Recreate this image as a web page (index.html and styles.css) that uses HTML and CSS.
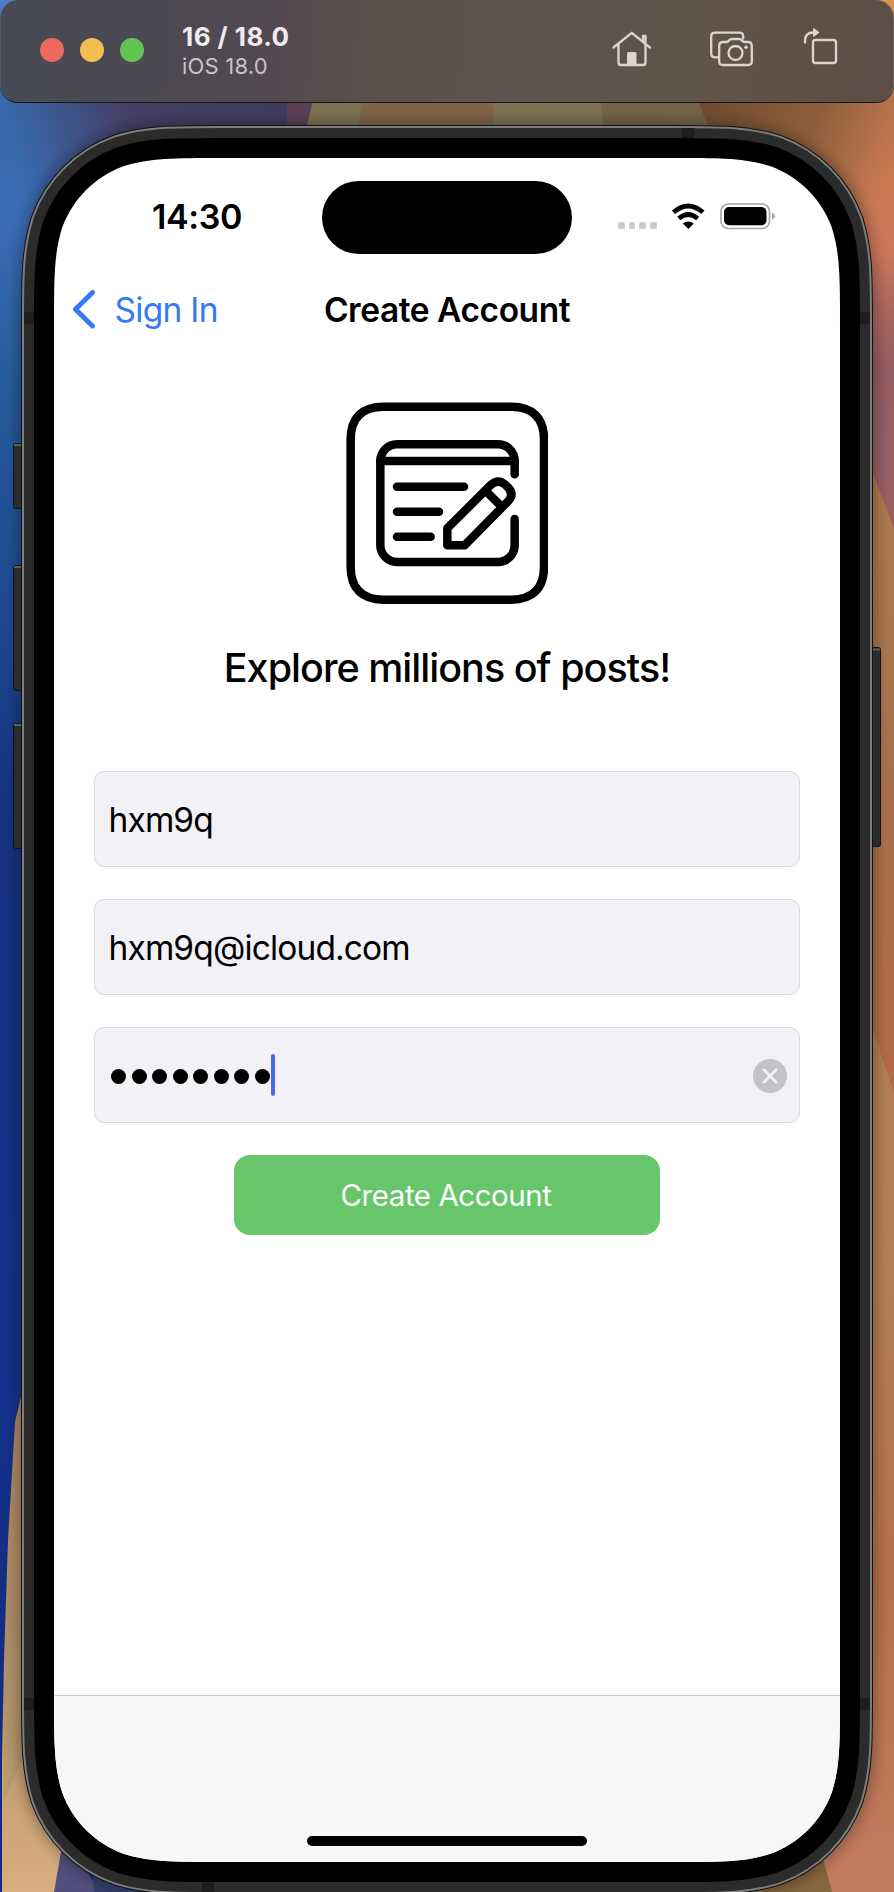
FILE: index.html
```html
<!DOCTYPE html>
<html lang="en">
<head>
<meta charset="utf-8">
<title>16 / 18.0</title>
<link rel="stylesheet" href="styles.css">
</head>
<body>
<div class="desktop">
  <svg class="backdrop" viewBox="0 0 894 1892" aria-hidden="true">
    <defs>
      <linearGradient id="left" x1="0" y1="0" x2="0" y2="1">
        <stop offset="0" stop-color="#4f7cc6"/><stop offset=".05" stop-color="#3768aa"/><stop offset=".12" stop-color="#3a6cb5"/>
        <stop offset=".2" stop-color="#255c9c"/><stop offset=".33" stop-color="#1d4890"/>
        <stop offset=".43" stop-color="#153180"/><stop offset=".75" stop-color="#12318a"/><stop offset="1" stop-color="#142a78"/>
      </linearGradient>
      <linearGradient id="violet" gradientUnits="userSpaceOnUse" x1="15" y1="150" x2="300" y2="80"><stop offset="0" stop-color="#443f62" stop-opacity="0"/><stop offset=".4" stop-color="#443f66"/><stop offset="1" stop-color="#3f3b5e"/></linearGradient>
      <linearGradient id="right" gradientUnits="userSpaceOnUse" x1="0" y1="0" x2="0" y2="560">
        <stop offset="0" stop-color="#d99452"/><stop offset=".18" stop-color="#b8704a"/><stop offset=".32" stop-color="#cb7850"/><stop offset=".45" stop-color="#cb775a"/>
        <stop offset=".56" stop-color="#a9655e"/><stop offset=".66" stop-color="#935d62"/><stop offset=".8" stop-color="#9d605a"/>
      </linearGradient>
      <linearGradient id="gold" x1="0" y1="0" x2="0" y2="1">
        <stop offset="0" stop-color="#ab7c50"/><stop offset=".5" stop-color="#a8714b"/><stop offset="1" stop-color="#b46a48"/>
      </linearGradient>
      <linearGradient id="lower" x1="0" y1="0" x2="0" y2="1">
        <stop offset="0" stop-color="#b07f53"/><stop offset=".3" stop-color="#b38054"/><stop offset=".65" stop-color="#b4704b"/><stop offset="1" stop-color="#c47a60"/>
      </linearGradient>
      <linearGradient id="rust" gradientUnits="userSpaceOnUse" x1="700" y1="110" x2="890" y2="190"><stop offset="0" stop-color="#6f4a30"/><stop offset=".55" stop-color="#8f5f3c"/><stop offset=".8" stop-color="#b06f48"/><stop offset="1" stop-color="#c77750" stop-opacity="0"/></linearGradient>
      <linearGradient id="sand" x1="0" y1="0" x2="0" y2="1"><stop offset="0" stop-color="#ab8563"/><stop offset=".5" stop-color="#ae8c66"/><stop offset="1" stop-color="#d9ae80"/></linearGradient>
      <filter id="soft" x="-20%" y="-20%" width="140%" height="140%"><feGaussianBlur stdDeviation="7"/></filter>
      <path id="outline" d="M168 0H618C666.3 0 690.5 0 716.5 8.2C745 18.6 767.4 41 777.8 69.5C786 95.5 786 119.7 786 168V1536C786 1584.3 786 1608.5 777.8 1634.5C767.4 1663 745 1685.4 716.5 1695.8C690.5 1704 666.3 1704 618 1704H168C119.7 1704 95.5 1704 69.5 1695.8C41 1685.4 18.6 1663 8.2 1634.5C0 1608.5 0 1584.3 0 1536V168C0 119.7 0 95.5 8.2 69.5C18.6 41 41 18.6 69.5 8.2C95.5 0 119.7 0 168 0Z"/>
    </defs>
    <rect width="894" height="1892" fill="url(#left)"/>
    <path fill="url(#violet)" d="M0 60H314L300 150L80 260H0Z"/>
    <path fill="#5b3f52" d="M287 100H316V130H287Z"/>
    <path fill="#7e7151" d="M313 100H364V130H306Z"/>
    <path fill="#7f6448" d="M362 100H494V130H358Z"/>
    <path fill="#7d7152" d="M492 100H603V130H495Z"/>
    <path fill="#746347" d="M601 100H700L712 130H604Z"/>
    <path fill="url(#right)" d="M860 0H894V560H860ZM697 100H894V260H800L711 132Z"/>
    <path fill="url(#rust)" d="M697 100H894V260H800L711 132Z"/>
    <path fill="#8d5f72" opacity=".6" d="M860 360L894 421V528L860 440Z" filter="url(#soft)"/>
    <path fill="url(#gold)" d="M860 440L894 528V1100H860Z"/>
    <path fill="url(#lower)" d="M860 992L894 1093V1892H780V1860L860 1780Z"/>
    <path fill="#86673f" d="M740 1892L822 1855L832 1892Z"/>
    <path fill="url(#sand)" d="M2 1892V1760L4 1660L8 1540L15 1422L24 1384V1700L90 1800L80 1892Z"/>
    <path fill="#a8946a" opacity=".55" d="M4 1676L22 1600V1760L4 1800Z"/>
    <path fill="#524e7d" d="M64 1835L54 1892H100Z"/>
    <path fill="#34406f" d="M92 1870L94 1892H240Z"/>
    <g transform="translate(54 158)" fill="none">
      <use href="#outline" stroke="#000" stroke-opacity=".3" stroke-width="72" filter="url(#soft)"/>
    </g>
    <g fill="#2b2b2b" stroke="#111">
      <rect x="13.500" y="443.500" width="14" height="65" rx="2"/>
      <rect x="13.500" y="565.500" width="14" height="125" rx="2"/>
      <rect x="13.500" y="723.500" width="14" height="125" rx="2"/>
      <rect x="866.500" y="647.500" width="14" height="199" rx="2"/>
    </g>
    <path stroke="#5c5c59" stroke-width="2" d="M14 445H22M14 567H22M14 725H22M872 649.500H880"/>
    <g transform="translate(54 158)" fill="none">
      <use href="#outline" stroke="#111" stroke-width="66"/>
      <use href="#outline" stroke="#7d7d7b" stroke-width="64"/>
      <use href="#outline" stroke="#2b2b2b" stroke-width="60"/>
      <use href="#outline" stroke="#000" stroke-width="40"/>
      <use href="#outline" fill="#fff"/>
    </g>
    <path fill="#1e1e1e" d="M24 312h10v12H24zM860 312h10v12h-10zM24 1698h10v12H24zM860 1698h10v12h-10zM682 128h12v10h-12zM202 1882h12v10h-12z"/>
  </svg>

  <header class="titlebar">
    <div class="lights"><i class="light close"></i><i class="light minimise"></i><i class="light zoom"></i></div>
    <div class="device-name"><strong>16 / 18.0</strong><span>iOS 18.0</span></div>
    <nav class="tools">
      <svg width="42" height="42" viewBox="610 28 42 42"><path d="M613.500 47.500L631.800 32.800L650 47.500"/><path d="M618.500 44V62.500Q618.500 65 621 65H643Q645.500 65 645.500 62.500V44M643 42V36H645.500V44"/><path class="solid" d="M627 65V53.500Q627 52 628.500 52H635Q636.500 52 636.500 53.500V65Z"/></svg>
      <svg width="46" height="42" viewBox="708 28 46 42"><path d="M718 57.300H715Q711.200 57.300 711.200 53.500V36.500Q711.200 32.700 715 32.700H739.500Q743.200 32.700 743.200 36.500V38.500"/><path d="M719.200 61.500V46Q719.200 42 723 42H726.500Q728 42 729 40.500Q730 39 732 39H739Q741 39 742 40.500Q743 42 744.500 42H748Q751.800 42 751.800 46V61.500Q751.800 65 748 65H723Q719.200 65 719.200 61.500Z"/><circle cx="735.500" cy="53" r="7"/><circle class="solid" cx="746" cy="47.300" r="1.700"/></svg>
      <svg width="38" height="42" viewBox="802 26 38 42"><rect x="813" y="40" width="23" height="23" rx="2.500"/><path d="M805 42.500V41Q805 32.500 813.500 32.500"/><path class="solid" d="M813 28.500Q813 27.800 813.800 28.300L819 32Q819.500 32.500 819 33L813.800 36.700Q813 37.100 813 36.400Z"/></svg>
    </nav>
  </header>

  <main class="screen">
    <div class="status">
      <time class="clock">14:30</time>
      <div class="island"></div>
      <div class="indicators">
        <div class="signal"><i></i><i></i><i></i><i></i></div>
        <svg class="wifi" width="34" height="26" viewBox="671 203 34 26"><g fill="none" stroke="#000" stroke-width="4.600"><path d="M673.500 212.300Q688.200 199.700 703 212.300"/><path d="M678.800 218.600Q688.200 210.400 697.700 218.600"/></g><path d="M688.300 229L682.800 223.600Q688.300 219.200 693.800 223.600Z"/></svg>
        <svg class="battery" width="56" height="28" viewBox="719 202 56 28"><rect x="721" y="204" width="48.500" height="24.500" rx="7.500" fill="none" stroke="#a7a7a7" stroke-width="1.700"/><rect x="724" y="207" width="42.500" height="18.300" rx="5"/><path fill="#a7a7a7" d="M772 212.500Q775 213.700 775 216.200Q775 218.700 772 220Z"/></svg>
      </div>
    </div>

    <div class="navbar">
      <a class="back"><svg width="24" height="40" viewBox="0 0 24 40"><path d="M20.500 2.500L3.500 19.300L20.500 36"/></svg><span>Sign In</span></a>
      <h1>Create Account</h1>
      <span></span>
    </div>

    <svg class="logo" viewBox="78 66 606 606" role="img" aria-label="Posts">
      <path d="M190 80H574C638 80 672 114 672 178V561C672 625 638 659 574 659H190C126 659 92 625 92 561V178C92 114 126 80 190 80Z"/>
      <path d="M584 283V243A50 50 0 0 0 534 193H231A50 50 0 0 0 181 243V496A50 50 0 0 0 231 546H534A50 50 0 0 0 584 496V417"/>
      <path d="M181 243H584M231 320H432M231 395H357M231 470H332"/>
      <path d="M382 496V445L512 315Q534 295 556 314L563 321Q584 342 565 363L434 496ZM500 335L545 380"/>
    </svg>
    <h2>Explore millions of posts!</h2>

    <form class="form">
      <div class="field">hxm9q</div>
      <div class="field">hxm9q@icloud.com</div>
      <div class="field secure">
        <div class="dots"><i></i><i></i><i></i><i></i><i></i><i></i><i></i><i></i></div>
        <div class="caret"></div>
        <svg class="clear" width="34" height="34" viewBox="0 0 34 34"><circle cx="17" cy="17" r="17"/><path d="M10.800 10.800L23.200 23.200M23.200 10.800L10.800 23.200"/></svg>
      </div>
      <button type="button" class="submit">Create Account</button>
    </form>

    <footer class="tabbar"><div class="home"></div></footer>
  </main>
</div>
</body>
</html>
```

FILE: styles.css
```css
* { box-sizing: border-box; }
body { margin: 0; font-family: Inter, "Liberation Sans", sans-serif; color: #000; }
.desktop { position: relative; width: 894px; height: 1892px; overflow: hidden; }
.backdrop { position: absolute; inset: 0; width: 894px; height: 1892px; }

.titlebar {
  position: relative;
  display: flex;
  align-items: center;
  height: 103px;
  padding: 0 54px 3px 40px;
  border-bottom: 1px solid #171513;
  border-radius: 18px;
  box-shadow: inset 1px 0 rgba(255,255,255,.1), inset -1px 0 rgba(255,255,255,.12);
  background: linear-gradient(95deg, #474a55 0%, #4b4952 14%, #514950 30%, #5a514a 43%, #5c544f 56%, #5e544a 67%, #615347 80%, #5d4e45 100%);
}
.lights { display: flex; gap: 16px; }
.light { width: 24px; height: 24px; border-radius: 50%; }
.close { background: #ec6a5e; }
.minimise { background: #f5bf4f; }
.zoom { background: #61c554; }
.device-name { display: flex; flex-direction: column; margin-left: 38px; padding-top: 3px; }
.device-name strong { font-size: 26px; line-height: 30px; font-weight: 700; letter-spacing: .45px; color: #eeecee; }
.device-name span { font-size: 22px; line-height: 28px; letter-spacing: .2px; color: #c9c3c8; }
.tools { display: flex; margin-left: auto; gap: 52px; margin-top: -2px; }
.tools svg { fill: none; stroke: #dfd4cb; stroke-width: 2.300; stroke-linecap: round; stroke-linejoin: round; }
.tools svg:nth-child(2) { margin-left: 4px; }
.tools svg:nth-child(3) { margin-left: -4px; margin-top: -2px; }
.tools .solid { fill: #dfd4cb; stroke: none; }

.screen {
  position: relative;
  display: flex;
  flex-direction: column;
  align-items: center;
  width: 786px;
  height: 1704px;
  margin: 55px 0 0 54px;
  clip-path: path("M168 0H618C666.300 0 690.500 0 716.500 8.200C745 18.600 767.400 41 777.800 69.500C786 95.500 786 119.700 786 168V1536C786 1584.300 786 1608.500 777.800 1634.500C767.400 1663 745 1685.400 716.500 1695.800C690.500 1704 666.300 1704 618 1704H168C119.700 1704 95.500 1704 69.500 1695.800C41 1685.400 18.600 1663 8.200 1634.500C0 1608.500 0 1584.300 0 1536V168C0 119.700 0 95.500 8.200 69.500C18.600 41 41 18.600 69.500 8.200C95.500 0 119.700 0 168 0Z");
}
.status { display: grid; grid-template-columns: 268px 250px 268px; align-items: center; width: 786px; height: 118px; }
.clock { padding: 0 0 2px 98px; font-size: 34px; font-weight: 600; letter-spacing: -.4px; white-space: nowrap; }
.island { height: 73.500px; margin-top: 1px; border-radius: 37px; background: #000; }
.indicators { display: flex; align-items: center; padding: 0 0 2px 46px; }
.signal { display: flex; gap: 4px; padding-top: 18px; }
.signal i { width: 6.700px; height: 7px; border-radius: 2px; background: #cbcbcb; }
.wifi { margin-left: 14px; }
.battery { margin-left: 14px; }

.navbar { display: grid; grid-template-columns: 1fr auto 1fr; align-items: center; width: 786px; height: 66px; padding: 1px 18px 0; }
.back { display: flex; align-items: center; gap: 18.500px; font-size: 33.500px; letter-spacing: -.7px; color: #3479f6; }
.back svg { fill: none; stroke: #3479f6; stroke-width: 4.900; stroke-linecap: round; stroke-linejoin: round; }
h1 { margin: 0; font-size: 33.500px; font-weight: 600; letter-spacing: -.45px; white-space: nowrap; }

.logo { width: 202px; height: 202px; margin-top: 60px; flex: none; fill: none; stroke: #000; stroke-width: 25.500; stroke-linecap: round; stroke-linejoin: round; }
h2 { margin: 34px 0 73px; font-size: 39.500px; line-height: 60px; font-weight: 500; letter-spacing: -.980px; white-space: nowrap; }

.form { display: flex; flex-direction: column; align-items: center; gap: 32px; }
.field { display: flex; align-items: center; width: 706px; height: 96px; padding: 2px 12px 0 13.500px; border: 1px solid #dadadd; border-radius: 10px; background: #f2f1f6; font-size: 33.500px; letter-spacing: -.860px; }
.dots { display: flex; gap: 5.500px; padding-left: 2.500px; }
.dots i { width: 15px; height: 15px; border-radius: 50%; background: #000; }
.caret { width: 4px; height: 42px; margin: -2px 0 0 1.500px; border-radius: 2px; background: #4c6ae8; }
.clear { margin-left: auto; }
.clear circle { fill: #c3c2c7; }
.clear path { stroke: #f2f1f6; stroke-width: 2.700; stroke-linecap: round; }
.submit { width: 426px; height: 80px; padding: 0 2px 0 0; border: 0; border-radius: 16px; background: #67c66a; color: #fff; font-family: inherit; font-size: 29.500px; letter-spacing: -.450px; }

.tabbar { display: flex; align-items: flex-end; justify-content: center; width: 786px; height: 167px; margin-top: auto; padding-bottom: 16px; border-top: 1px solid #cecece; background: #f7f7f7; }
.home { width: 280px; height: 10px; border-radius: 5px; background: #000; }
```
